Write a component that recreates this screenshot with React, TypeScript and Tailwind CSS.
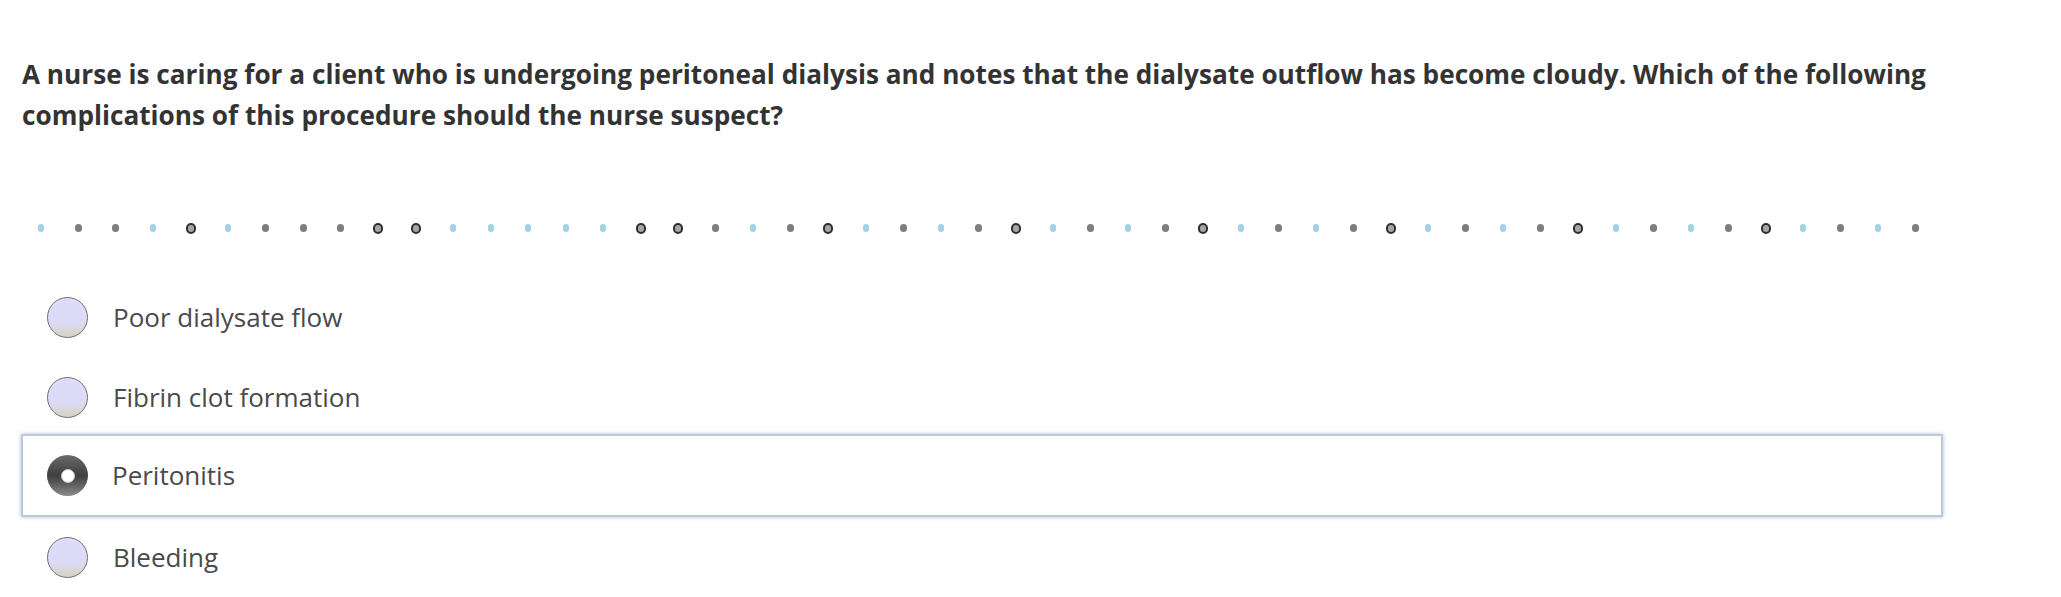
import React from 'react';

type DotKind = 'b' | 'g' | 'o';

// Progress strip under the question (b = blue, g = gray, o = ring)
const DOTS: DotKind[] = (
  'bggbobgggoobbbbboogbgobgbgobgbgobgbgobgbgobgbgobgbg'.split('') as DotKind[]
);

const OPTIONS = [
  'Poor dialysate flow',
  'Fibrin clot formation',
  'Peritonitis',
  'Bleeding',
];

const Dot: React.FC<{ kind: DotKind }> = ({ kind }) => {
  if (kind === 'b') {
    return <div className="w-[6px] h-[8px] rounded-full bg-[#a2d2e8]" />;
  }
  if (kind === 'g') {
    return <div className="w-[7px] h-[8px] rounded-full bg-[#7e7e7e]" />;
  }
  return <div className="w-[10px] h-[11px] rounded-full border-2 border-[#2f2f2f] bg-[#a5a5a5]" />;
};

const Radio: React.FC<{ checked: boolean }> = ({ checked }) => {
  if (checked) {
    return (
      <div className="w-[41px] h-[41px] rounded-full bg-linear-to-b from-[#6b6b6b] via-[#3f3f3f] to-[#8c8c8c] flex items-center justify-center shrink-0">
        <div className="w-[14px] h-[14px] rounded-full bg-white border border-[#c8c8c8]" />
      </div>
    );
  }
  return (
    <div className="w-[41px] h-[41px] rounded-full border-[1.5px] border-[#6f6f6f] bg-linear-to-b from-[#dedcf9] via-[#dcdaf6] via-65% to-[#d5d2bc] shrink-0" />
  );
};

const App: React.FC = () => {
  const selected = 2;

  return (
    <div className="w-[2061px] h-[597px] bg-white overflow-hidden font-['Open_Sans',sans-serif]">
      {/* Question */}
      <div className="pl-[22px] pt-[54px] w-[1960px]">
        <p className="text-[26.2px] leading-[41px] font-bold text-[#333333]">
          A nurse is caring for a client who is undergoing peritoneal dialysis and notes that the dialysate outflow has become cloudy. Which of the following complications of this procedure should the nurse suspect?
        </p>
      </div>

      {/* Progress dots */}
      <div className="mt-[87px] pl-[22px] flex items-center h-[10px]">
        {DOTS.map((d, i) => (
          <div key={i} className="w-[37.5px] flex justify-center items-center">
            <Dot kind={d} />
          </div>
        ))}
      </div>

      {/* Answer options */}
      <div className="mt-[44px] pl-[21px] w-[1943px] flex flex-col">
        {OPTIONS.map((opt, i) => (
          <div
            key={opt}
            className={
              i === selected
                ? 'h-[83px] -mt-[3px] flex items-center gap-[24px] pl-[24px] border-2 border-[#b9c9de] shadow-[0_0_4px_rgba(110,140,185,0.55)] bg-white'
                : 'h-[80px] flex items-center gap-[25px] pl-[26px]'
            }
          >
            <Radio checked={i === selected} />
            <span className="text-[26px] text-[#4a4a4a]">{opt}</span>
          </div>
        ))}
      </div>
    </div>
  );
};

export default App;
